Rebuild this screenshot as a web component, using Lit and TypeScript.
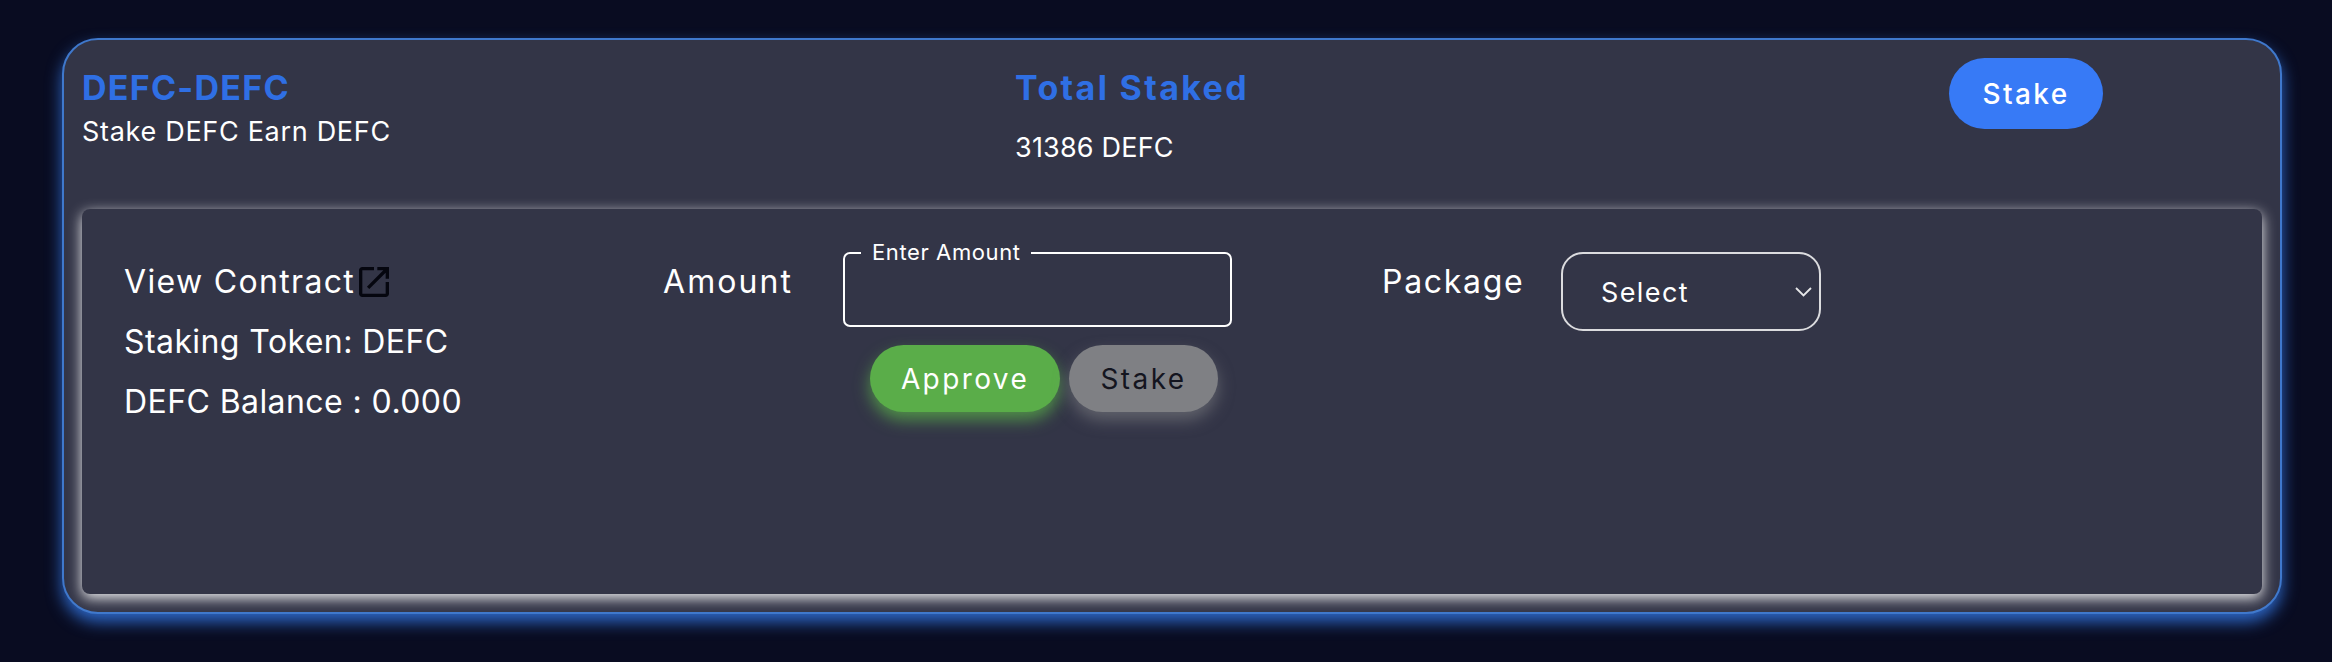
import { LitElement, html, css } from "lit";
import { customElement } from "lit/decorators.js";

@customElement("app-root")
export class AppRoot extends LitElement {
  static styles = css`
    :host { display: block; background: #090c21; min-height: 662px; font-family: Inter, "Noto Sans", sans-serif; color: #fff; }
    * { box-sizing: border-box; }
    .page { padding: 38px 50px 48px 62px; }
    .card { width: 2220px; height: 576px; border: 2px solid #3f78cc; border-radius: 36px; background: #333547; padding: 18px 18px 0; box-shadow: 0 8px 16px #2d66c4; display: flex; flex-direction: column; }
    .head { height: 151px; display: grid; grid-template-columns: 933px 934px 1fr; }
    .col { padding-top: 8px; }
    .title { font-size: 34px; line-height: 44px; font-weight: 700; color: #2f6fe4; letter-spacing: 1.25px; }
    .title.wide { letter-spacing: 2.35px; }
    .sub { font-size: 27px; line-height: 36px; margin-top: 4px; letter-spacing: 0.7px; }
    .sub.low { margin-top: 20px; letter-spacing: 0.2px; }
    .pill { font: inherit; border: none; border-radius: 36px; display: block; }
    .stake-top { width: 154px; height: 71px; background: #377af6; color: #fff; font-size: 28px; font-weight: 500; letter-spacing: 2.4px; }
    .panel { height: 385px; border-radius: 8px; background: #333547; box-shadow: 0 4px 14px rgba(255,255,255,.92); padding: 31px 0 0 42px; display: flex; }
    .info { width: 539px; padding-top: 12px; }
    .row { font-size: 32px; line-height: 60px; display: flex; align-items: center; letter-spacing: 0.42px; }
    .row.contract { letter-spacing: 1.33px; }
    .row svg { width: 40px; height: 40px; margin-left: -1px; fill: #05060f; flex: none; }
    .label { font-size: 32px; line-height: 60px; padding-top: 12px; }
    .amount-label { width: 180px; letter-spacing: 2.1px; }
    .amount { width: 389px; }
    fieldset { margin: -1px 0 0; padding: 0; border: 2.5px solid #fff; border-radius: 7px; height: 88px; display: block; }
    legend { margin-left: 16px; padding: 0 10px 2px 11px; font-size: 22px; line-height: 26px; letter-spacing: 0.6px; }
    input { display: block; width: 100%; height: 50px; background: transparent; border: none; outline: none; color: #fff; font: inherit; padding: 0 20px; }
    .btns { display: flex; gap: 9px; margin: 18px 0 0 27px; }
    .btns .pill { height: 67px; font-size: 28px; letter-spacing: 2.4px; }
    .approve { width: 190px; background: #5aad49; color: #fff; box-shadow: 0 8px 16px rgba(90,173,73,.75); }
    .stake { width: 149px; background: #7f8084; color: #14151f; box-shadow: 0 8px 16px rgba(127,128,132,.6); }
    .pkg-label { margin-left: 150px; width: 179px; letter-spacing: 1.7px; }
    .select { position: relative; width: 260px; height: 79px; margin-top: 12px; }
    select { appearance: none; width: 100%; height: 100%; background: transparent; color: #fff; border: 2px solid #dcdcdf; border-radius: 22px; font: inherit; font-size: 27px; padding: 2px 0 0 38px; letter-spacing: 1.4px; outline: none; }
    .chev { position: absolute; left: 234px; top: 35px; width: 17px; height: 10px; fill: none; stroke: #e6e6e8; stroke-width: 1.8; pointer-events: none; }
  `;

  render() {
    return html`
      <div class="page">
        <div class="card">
          <div class="head">
            <div class="col">
              <div class="title">DEFC-DEFC</div>
              <div class="sub">Stake DEFC Earn DEFC</div>
            </div>
            <div class="col">
              <div class="title wide">Total Staked</div>
              <div class="sub low">31386 DEFC</div>
            </div>
            <div><button class="pill stake-top">Stake</button></div>
          </div>
          <div class="panel">
            <div class="info">
              <div class="row contract">View Contract<svg viewBox="0 0 24 24"><path d="M19 19H5V5h7V3H5c-1.11 0-2 .9-2 2v14c0 1.1.89 2 2 2h14c1.1 0 2-.9 2-2v-7h-2v7zM14 3v2h3.59l-9.83 9.83 1.41 1.41L19 6.41V10h2V3h-7z"></path></svg></div>
              <div class="row">Staking Token: DEFC</div>
              <div class="row">DEFC Balance : 0.000</div>
            </div>
            <div class="label amount-label">Amount</div>
            <div class="amount">
              <fieldset><legend>Enter Amount</legend><input type="text" /></fieldset>
              <div class="btns">
                <button class="pill approve">Approve</button>
                <button class="pill stake">Stake</button>
              </div>
            </div>
            <div class="label pkg-label">Package</div>
            <div class="select">
              <select><option>Select</option></select>
              <svg class="chev" viewBox="0 0 17 10"><path d="M1 1l7.5 7.5L16 1"></path></svg>
            </div>
          </div>
        </div>
      </div>
    `;
  }
}
